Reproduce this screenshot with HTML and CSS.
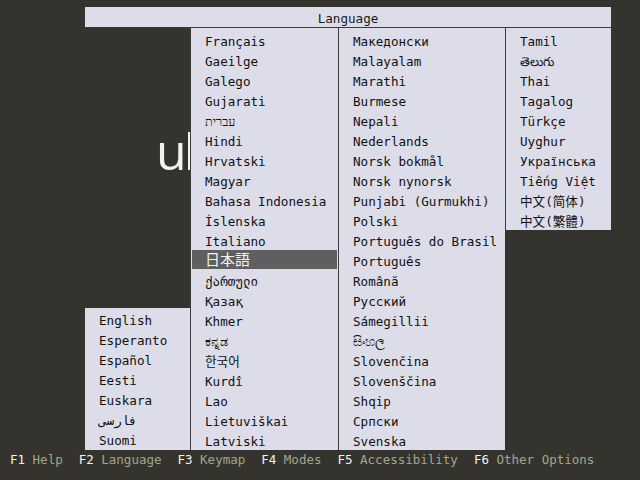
FILE: index.html
```html
<!DOCTYPE html>
<html>
<head>
<meta charset="utf-8">
<link rel="stylesheet" href="styles.css">
</head>
<body>
<div class="screen">
  <div class="stage">
    <div class="logo">ubuntu</div>
    <div class="dialog">
      <div class="title">Language</div>
      <div class="columns">
        <ul class="col col-first">
          <li>English</li>
          <li>Esperanto</li>
          <li>Español</li>
          <li>Eesti</li>
          <li>Euskara</li>
          <li>فارسی</li>
          <li>Suomi</li>
        </ul>
        <ul class="col col-second">
          <li>Français</li>
          <li>Gaeilge</li>
          <li>Galego</li>
          <li>Gujarati</li>
          <li>עברית</li>
          <li>Hindi</li>
          <li>Hrvatski</li>
          <li>Magyar</li>
          <li>Bahasa Indonesia</li>
          <li>Íslenska</li>
          <li>Italiano</li>
          <li class="selected">日本語</li>
          <li>ქართული</li>
          <li>Қазақ</li>
          <li>Khmer</li>
          <li>ಕನ್ನಡ</li>
          <li>한국어</li>
          <li>Kurdî</li>
          <li>Lao</li>
          <li>Lietuviškai</li>
          <li>Latviski</li>
        </ul>
        <ul class="col col-third">
          <li>Македонски</li>
          <li>Malayalam</li>
          <li>Marathi</li>
          <li>Burmese</li>
          <li>Nepali</li>
          <li>Nederlands</li>
          <li>Norsk bokmål</li>
          <li>Norsk nynorsk</li>
          <li>Punjabi (Gurmukhi)</li>
          <li>Polski</li>
          <li>Português do Brasil</li>
          <li>Português</li>
          <li>Română</li>
          <li>Русский</li>
          <li>Sámegillii</li>
          <li>සිංහල</li>
          <li>Slovenčina</li>
          <li>Slovenščina</li>
          <li>Shqip</li>
          <li>Српски</li>
          <li>Svenska</li>
        </ul>
        <ul class="col col-fourth">
          <li>Tamil</li>
          <li>తెలుగు</li>
          <li>Thai</li>
          <li>Tagalog</li>
          <li>Türkçe</li>
          <li>Uyghur</li>
          <li>Українська</li>
          <li>Tiếng Việt</li>
          <li>中文(简体)</li>
          <li>中文(繁體)</li>
        </ul>
      </div>
    </div>
  </div>
  <div class="footer">
    <span class="fkey"><b>F1</b> Help</span>
    <span class="fkey"><b>F2</b> Language</span>
    <span class="fkey"><b>F3</b> Keymap</span>
    <span class="fkey"><b>F4</b> Modes</span>
    <span class="fkey"><b>F5</b> Accessibility</span>
    <span class="fkey"><b>F6</b> Other Options</span>
  </div>
</div>
</body>
</html>
```

FILE: styles.css
```css
html, body {
  margin: 0;
  padding: 0;
}

body {
  width: 640px;
  height: 480px;
  background: #34332d;
  overflow: hidden;
  font-family: "DejaVu Sans Mono", "Noto Sans CJK JP", monospace;
  font-size: 12.6px;
}

.screen {
  display: flex;
  flex-direction: column;
  height: 480px;
}

.stage {
  position: relative;
  height: 450px;
  padding: 7px 29px 0 85px;
  box-sizing: border-box;
}

.logo {
  position: absolute;
  left: 156px;
  top: 116px;
  font-family: "Open Sans", "DejaVu Sans", sans-serif;
  font-size: 50px;
  letter-spacing: -3px;
  color: #f3f2ec;
  line-height: 70px;
  z-index: 0;
}

.dialog {
  position: relative;
  z-index: 1;
  width: 526px;
  display: flex;
  flex-direction: column;
  height: 443px;
}

.title {
  background: #dcdde9;
  color: #1a1a1a;
  text-align: center;
  height: 21px;
  line-height: 24px;
  border-bottom: 1px solid #3a3a3a;
  box-sizing: border-box;
}

.columns {
  display: flex;
  flex: 1;
  align-items: flex-start;
}

.col {
  list-style: none;
  margin: 0;
  padding: 2px 0 0 0;
  background: #dcdde9;
  color: #111;
  box-sizing: border-box;
}

.col li {
  height: 20px;
  box-sizing: border-box;
  padding-top: 3px;
  line-height: 18px;
  padding-left: 14px;
  white-space: nowrap;
}

.col-first {
  width: 105px;
  align-self: flex-end;
  padding-top: 2px;
}

.col-first li {
  padding-top: 2px;
}

.col-second {
  width: 148px;
  align-self: stretch;
  border-left: 1px solid #3a3a3a;
}

.col-third {
  width: 167px;
  align-self: stretch;
  border-left: 1px solid #3a3a3a;
}

.col-fourth {
  width: 106px;
  border-left: 1px solid #3a3a3a;
  padding-bottom: 0;
}

.col li.selected {
  background: #5f5f5f;
  color: #f4f4f4;
  height: 19px;
  margin: 0 1px 1px 1px;
  padding-left: 13px;
  padding-top: 1px;
  line-height: 18px;
  font-size: 15px;
}

.footer {
  height: 30px;
  display: flex;
  gap: 16px;
  padding-left: 10px;
  line-height: 20px;
  font-size: 12.5px;
  color: #a4a68c;
}

.fkey b {
  font-weight: normal;
  color: #f2f2f2;
}
```
